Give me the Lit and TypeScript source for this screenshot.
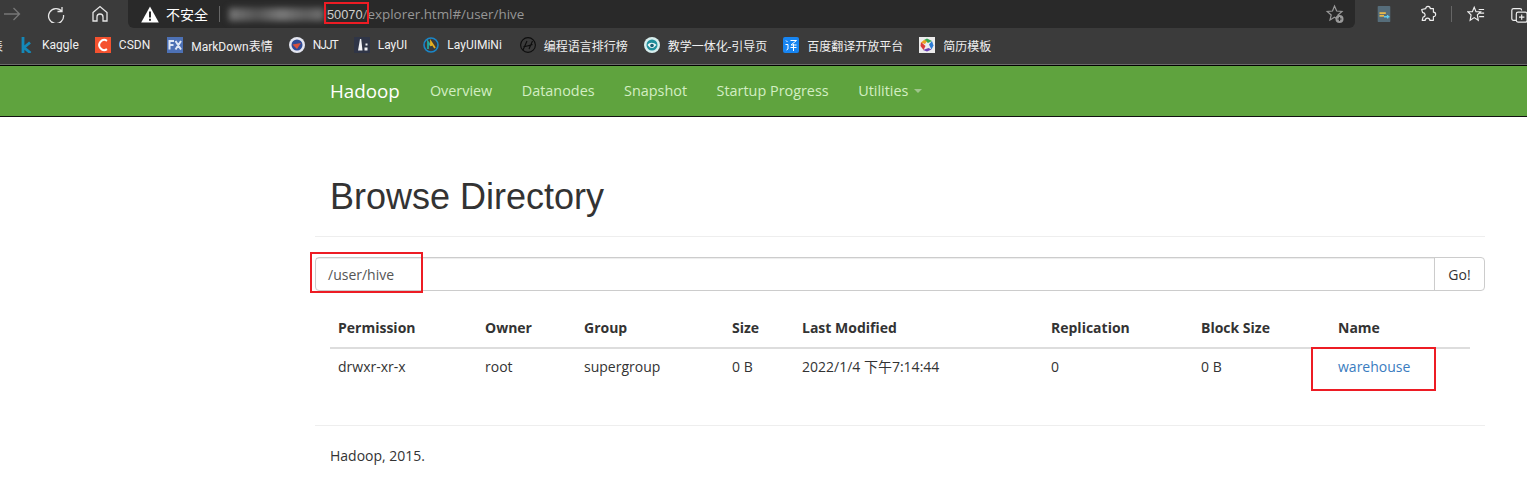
import { LitElement, html, css } from "lit";
import { customElement } from "lit/decorators.js";

const marks = [
  { t: "Kaggle", i: html`<svg class="ic" viewBox="0 0 16 16"><path d="M5 0v16M12 5.500 6 10.500l6.500 5.500" fill="none" stroke="#1488b8" stroke-width="2.800"/></svg>` },
  { t: "CSDN", i: html`<svg class="ic" viewBox="0 0 16 16"><rect width="16" height="16" fill="#f5522f"/><path d="M12 3.800a5 5 0 1 0 0 8.400" fill="none" stroke="#fff" stroke-width="2"/></svg>` },
  { t: "MarkDown表情", i: html`<svg class="ic" viewBox="0 0 16 16"><rect width="16" height="16" fill="#4d71b5"/><path d="M2.500 12.500V4H7M2.500 8H6.500M8.500 4l5.500 8.500M14 4l-5.500 8.500" fill="none" stroke="#dfe7f6" stroke-width="2"/></svg>` },
  { t: "NJJT", i: html`<svg class="ic" viewBox="0 0 16 16"><circle cx="8" cy="8" r="8" fill="#e4e6f0"/><circle cx="8" cy="8" r="5.500" fill="#2f4a96"/><path d="M3.500 7.500 12 6 8 12z" fill="#d9503c"/></svg>` },
  { t: "LayUI", i: html`<svg class="ic" viewBox="0 0 16 16"><rect width="16" height="16" rx="1" fill="#2f3547"/><path d="M4 13.500 6 2h1.200l1.300 11.500zM11.500 6.500h2v2h-2zM10.500 10.500h3v3h-3z" fill="#f0f1f5"/></svg>` },
  { t: "LayUIMiNi", i: html`<svg class="ic" viewBox="0 0 16 16"><circle cx="8" cy="8" r="7" fill="none" stroke="#1a87c9" stroke-width="1.600"/><path d="M5 12V5l3 4" fill="none" stroke="#23a7a0" stroke-width="1.800"/><path d="M8 9V5l4 6" fill="none" stroke="#e8b01f" stroke-width="1.800"/></svg>` },
  { t: "编程语言排行榜", i: html`<svg class="ic" viewBox="0 0 16 16"><circle cx="8" cy="8" r="7.400" fill="none" stroke="#0d0d0d" stroke-width="1.100"/><path d="M3 13 7 4M3.500 9.500c3 0 6-1 9-2M9 12l3.500-8" fill="none" stroke="#0d0d0d" stroke-width="1.100"/></svg>` },
  { t: "教学一体化-引导页", i: html`<svg class="ic" viewBox="0 0 16 16"><circle cx="8" cy="8" r="8" fill="#d7eeee"/><circle cx="8" cy="8" r="5.500" fill="#1f8f9c"/><path d="M3.500 8c2-3 6-3 9 0-2 1-2 3-4.500 3S5 9 3.500 8z" fill="#eaf6f6"/><circle cx="8" cy="8.500" r="1.800" fill="#175f74"/></svg>` },
  { t: "百度翻译开放平台", i: html`<svg class="ic" viewBox="0 0 16 16"><rect width="16" height="16" rx="2" fill="#1785f2"/><path d="M3 3.500l1.500 1.500M2.500 7.500H5V12l-1.500 1M7.500 3.500h6L8 8h5.500M10.500 7v7M7.500 10.500h6" fill="none" stroke="#fff" stroke-width="1"/></svg>` },
  { t: "简历模板", i: html`<svg class="ic" viewBox="0 0 16 16"><rect width="16" height="16" fill="#ececec"/><path d="M5 3l3-1.500 5 2.500-4 2z" fill="#35a853"/><path d="M13 4l1.500 4.500-2 4-2.500-5z" fill="#2b7bd6"/><path d="M12.500 12.500 8 14.500 4 13l5.500-2z" fill="#6a3fb5"/><path d="M4.500 13 1.500 9 2 5l4.500 4z" fill="#d93a3a"/><path d="M2 5.500 5 3l3 1-2 3z" fill="#e9a21f"/></svg>` },
];

const heads = ["Permission", "Owner", "Group", "Size", "Last Modified", "Replication", "Block Size", "Name"];

@customElement("app-root")
export class AppRoot extends LitElement {
  static styles = css`
    :host { display: block; width: 1527px; height: 484px; overflow: hidden; background: #fff; font-family: "Open Sans", "Noto Sans CJK SC", sans-serif; color: #333; font-size: 14px; }
    .top { height: 28px; background: #3b3b3b; display: flex; }
    .nav-icons { width: 128px; flex: none; display: flex; align-items: center; padding-left: 4px; box-sizing: border-box; }
    .nav-icons svg { width: 18px; height: 18px; fill: none; stroke-width: 1.300; flex: none; }
    .fwd { stroke: #777; margin-right: 25px; }
    .rel { stroke: #e6e6e6; margin-right: 26px; }
    .home { stroke: #e6e6e6; }
    .addr { width: 1227px; flex: none; background: #292929; border-radius: 0 0 6px 6px; display: flex; align-items: center; padding-left: 13px; box-sizing: border-box; position: relative; }
    .warn { width: 18px; height: 17px; flex: none; margin-right: 7px; }
    .unsafe { color: #fff; font-size: 14px; white-space: nowrap; }
    .sep { width: 1px; height: 16px; background: #666; margin: 0 9px 0 11px; flex: none; }
    .blur { width: 95px; height: 13px; background: linear-gradient(90deg, #777, #555 30%, #7a7a7a 55%, #5e5e5e 80%, #707070); filter: blur(3px); flex: none; }
    .host { color: #cfcfcf; font-family: "Liberation Sans", sans-serif; font-size: 12.800px; margin-left: 3px; }
    .path { color: #969696; font-family: "Open Sans", sans-serif; font-size: 13.400px; }
    .addr-star { position: absolute; right: 10px; top: 4px; width: 20px; height: 20px; }
    .tools { flex: 1; display: flex; align-items: center; padding-left: 20px; overflow: hidden; }
    .tools svg { width: 18px; height: 18px; flex: none; fill: none; stroke: #eee; stroke-width: 1.300; }
    .t1 { margin-right: 26px; }
    .t2 { margin-right: 14px; }
    .t-sep { width: 1px; height: 16px; background: #666; margin-right: 15px; flex: none; }
    .t3 { margin-right: 25px; }
    .marks { height: 37px; background: #3b3b3b; display: flex; align-items: center; padding: 0 0 2px 18px; gap: 16px; position: relative; box-sizing: border-box; border-bottom: 1px solid #6b6b6b; font-size: 12px; color: #f0f0f0; white-space: nowrap; font-family: "Roboto", "Noto Sans CJK SC", sans-serif; }
    .clip { position: absolute; left: -9px; top: 9px; }
    .mark { display: flex; align-items: center; gap: 8px; }
    .mark:nth-of-type(3) { margin-left: 1px; }
    .mark:nth-of-type(4) span { letter-spacing: -1px; }
    .mark:nth-of-type(7) { margin-left: 2px; }
    .ic { width: 16px; height: 16px; flex: none; }
    .gap { height: 1px; background: #000; }
    .navbar { height: 51px; box-sizing: border-box; background: #5fa33e; border-bottom: 1px solid #111; display: flex; align-items: center; padding: 0 0 1px 330px; }
    .brand { font-size: 18.800px; color: #fff; margin-right: 30px; }
    .link { font-size: 14.400px; color: #d3eec3; margin-right: 29.500px; display: flex; align-items: center; white-space: nowrap; }
    .caret { width: 0; height: 0; border-left: 4px solid transparent; border-right: 4px solid transparent; border-top: 4px solid #9fc48c; margin-left: 6px; }
    .page { width: 1170px; margin-left: 315px; }
    .inner { padding: 0 15px; }
    h1 { font-size: 36px; font-weight: 400; margin: 59px 0 0; line-height: 42px; color: #333; font-family: "Liberation Sans", sans-serif; }
    .rule { height: 1px; background: #eee; }
    .h-rule { margin-top: 18px; }
    .group { display: flex; height: 34px; margin-top: 20px; box-sizing: border-box; border: 1px solid #ccc; border-radius: 4px; position: relative; }
    .input { flex: 1; padding-left: 12px; display: flex; align-items: center; color: #555; box-shadow: inset 0 1px 1px rgba(0,0,0,.075); }
    .go { width: 49px; border-left: 1px solid #ccc; display: flex; align-items: center; justify-content: center; color: #333; }
    .row { display: grid; grid-template-columns: 147px 99px 148px 70px 249px 150px 137px 140px; }
    .cell { padding: 8px; line-height: 20px; }
    .head { margin-top: 15px; border-bottom: 2px solid #ddd; font-weight: 700; box-sizing: border-box; height: 43px; align-items: end; padding-bottom: 1px; }
    .name { position: relative; }
    .link-name { color: #3a7cc0; }
    .box { position: absolute; border: 2px solid #ed1c24; box-sizing: border-box; pointer-events: none; }
    .box-port { left: 196px; top: 2px; width: 45px; height: 22px; }
    .box-input { left: -6px; top: -6px; width: 113px; height: 41px; }
    .box-name { left: -19px; top: -2px; width: 125px; height: 44px; }
    .foot-rule { margin-top: 40px; }
    .foot { padding: 20px 15px 0; line-height: 20px; }
  `;

  render() {
    return html`
      <div class="top">
        <div class="nav-icons">
          <svg class="fwd" viewBox="0 0 18 18"><path d="M0 9h15.500M9.500 3l6 6-6 6"/></svg>
          <svg class="rel" viewBox="0 0 18 18"><path d="M15 2v4.500h-4.500M15 6.500A7.500 7.500 0 1 0 16.500 10"/></svg>
          <svg class="home" viewBox="0 0 18 18"><path d="M2 7.500 9 1.500l7 6V16h-4v-4a3 3 0 0 0-6 0v4H2z"/></svg>
        </div>
        <div class="addr">
          <svg class="warn" viewBox="0 0 18 17"><path d="M9 .5 17.800 16.500H.2z" fill="#fff"/><path d="M8 5.500h2v6H8zM8 12.700h2v2H8z" fill="#292929"/></svg>
          <span class="unsafe">不安全</span>
          <span class="sep"></span>
          <span class="blur"></span>
          <span class="host">50070</span><span class="path">/explorer.html#/user/hive</span>
          <div class="box box-port"></div>
          <svg class="addr-star" viewBox="0 0 20 20" fill="none" stroke="#999" stroke-width="1.200"><path d="M9.500 2l2.200 5 5.300.5-4 3.500 1 5-4.500-2.700L5 16l1.200-5-4-3.500L7.500 7z"/><circle cx="14.500" cy="15" r="4" fill="#999" stroke="none"/><path d="M12.500 15h4M14.500 13v4" stroke="#292929"/></svg>
        </div>
        <div class="tools">
          <svg class="t1" viewBox="0 0 20 20" style="stroke:none"><rect x="3" y="1" width="14" height="18" rx="1" fill="#566d7a"/><rect x="5" y="8" width="7" height="2" fill="#e8b94a"/><rect x="5" y="11" width="5" height="2" fill="#e8b94a"/><path d="M10 13h6M14 11v4" stroke="#5ecbf0" stroke-width="1.500"/></svg>
          <svg class="t2" viewBox="0 0 20 20"><path d="M7.500 4a2.500 2.500 0 0 1 5 0h3.500v4a2.500 2.500 0 0 1 0 5v4h-4a2.500 2.500 0 0 0-5 0H3.500l1-3.500a2.500 2.500 0 0 0-.5-5L3 5z" stroke-linejoin="round"/></svg>
          <span class="t-sep"></span>
          <svg class="t3" viewBox="0 0 20 20"><path d="M8 2.500l2 5h5l-3.500 3.500 1 6L8 14l-4.500 3 1-6L1 7.500h5zM13 5h6M14 9h5M13.500 13H19"/></svg>
          <svg viewBox="0 0 20 20"><path d="M7 17H4a2 2 0 0 1-2-2V6a2 2 0 0 1 2-2h7a2 2 0 0 1 2 2"/><rect x="7" y="8" width="12" height="11" rx="2"/><path d="M13 10.500v6M10 13.500h6"/></svg>
        </div>
      </div>
      <div class="marks">
        <span class="clip">表</span>
        ${marks.map((m) => html`<div class="mark">${m.i}<span>${m.t}</span></div>`)}
      </div>
      <div class="gap"></div>
      <div class="navbar">
        <span class="brand">Hadoop</span>
        <span class="link">Overview</span>
        <span class="link">Datanodes</span>
        <span class="link">Snapshot</span>
        <span class="link">Startup Progress</span>
        <span class="link">Utilities<i class="caret"></i></span>
      </div>
      <div class="page">
        <div class="inner">
          <h1>Browse Directory</h1>
        </div>
        <div class="rule h-rule"></div>
        <div class="group">
          <div class="input">/user/hive</div>
          <div class="go">Go!</div>
          <div class="box box-input"></div>
        </div>
        <div class="inner">
          <div class="row head">${heads.map((h) => html`<div class="cell">${h}</div>`)}</div>
          <div class="row">
            <div class="cell">drwxr-xr-x</div>
            <div class="cell">root</div>
            <div class="cell">supergroup</div>
            <div class="cell">0 B</div>
            <div class="cell">2022/1/4 下午7:14:44</div>
            <div class="cell">0</div>
            <div class="cell">0 B</div>
            <div class="cell name"><span class="link-name">warehouse</span><div class="box box-name"></div></div>
          </div>
        </div>
        <div class="rule foot-rule"></div>
        <div class="foot">Hadoop, 2015.</div>
      </div>
    `;
  }
}
